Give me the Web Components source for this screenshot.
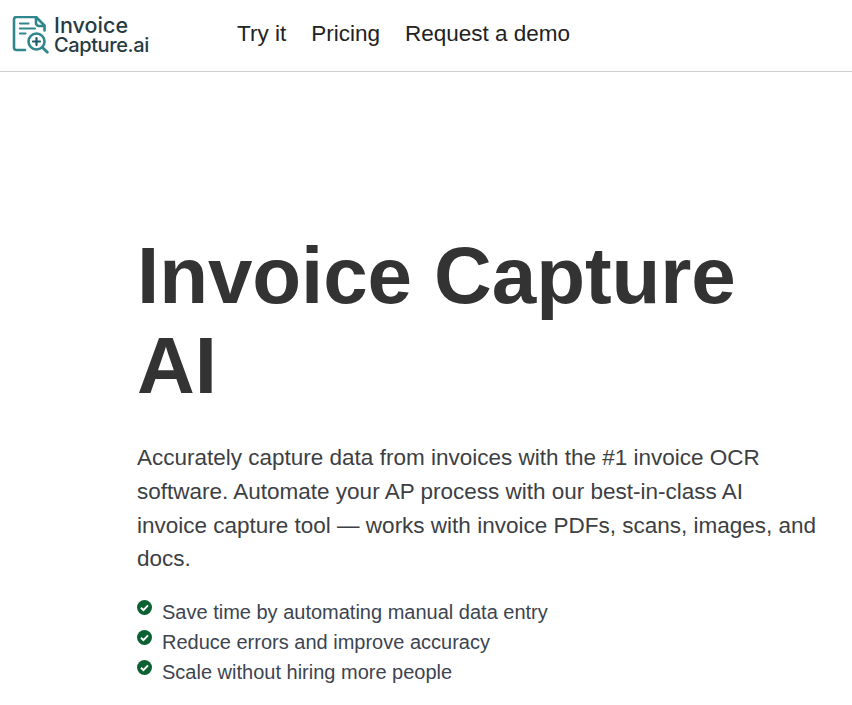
<!DOCTYPE html>
<html>
<head>
<meta charset="utf-8">
<title>Invoice Capture AI</title>
<style>
html, body { margin: 0; padding: 0; background: #fff; overflow: hidden; }
body { font-family: "Liberation Sans", Arial, sans-serif; }
</style>
</head>
<body>
<site-header>
  <a slot="links" href="#">Try it</a>
  <a slot="links" href="#">Pricing</a>
  <a slot="links" href="#">Request a demo</a>
</site-header>
<hero-section>
  <span slot="title">Invoice Capture AI</span>
  <span slot="lead">Accurately capture data from invoices with the #1 invoice OCR software. Automate your AP process with our best-in-class AI invoice capture tool — works with invoice PDFs, scans, images, and docs.</span>
  <check-item>Save time by automating manual data entry</check-item>
  <check-item>Reduce errors and improve accuracy</check-item>
  <check-item>Scale without hiring more people</check-item>
</hero-section>
<script>
class SiteLogo extends HTMLElement {
  connectedCallback() {
    var shadow = this.attachShadow({mode: 'open'})
    shadow.innerHTML = `<style>
:host { display: flex; align-items: center; gap: 5px; width: 150px; }
svg { width: 37px; height: 39px; flex: none; }
#name {
  font-family: Inter, "Liberation Sans", sans-serif;
  font-weight: 500;
  color: #263b44;
  margin-top: -1px;
}
#name div { height: 20px; line-height: 20px; white-space: nowrap; }
#l1 { font-size: 21.500px; letter-spacing: 0.05px; }
#l2 { font-size: 20px; letter-spacing: -0.4px; }
</style>
<svg viewBox="12 16 37 39" fill="none" stroke="#2f868c" stroke-width="2.600" stroke-linecap="round" stroke-linejoin="round">
  <path d="M25 50H16.500a2.500 2.500 0 0 1-2.500-2.500V19.500a2.500 2.500 0 0 1 2.500-2.500H36l8.500 8.500v5"/>
  <path d="M36 17v6a3 3 0 0 0 3 3h5.500"/>
  <path d="M20 23.500h8.500M20 28.500h15M20 33.500h5.500" stroke-width="2.200"/>
  <circle cx="36.500" cy="41.500" r="8"/>
  <path d="M36.500 38v7M33 41.500h7" stroke="#1f5c66" stroke-width="2.200"/>
  <path d="M42.500 47.500l4.800 4.800" stroke-width="2.800"/>
</svg>
<div id="name"><div id="l1">Invoice</div><div id="l2">Capture.ai</div></div>`
  }
}
customElements.define('site-logo', SiteLogo)

class SiteHeader extends HTMLElement {
  connectedCallback() {
    var shadow = this.attachShadow({mode: 'open'})
    shadow.innerHTML = `<style>
:host {
  display: flex;
  align-items: center;
  height: 71px;
  padding-left: 12px;
  border-bottom: 1px solid #cfcfcf;
}
nav { display: flex; gap: 25px; margin-left: 75px; padding-bottom: 4px; }
::slotted(a) {
  font-size: 22.500px;
  color: #222;
  text-decoration: none;
}
</style>
<site-logo></site-logo>
<nav><slot name="links"></slot></nav>`
  }
}
customElements.define('site-header', SiteHeader)

class CheckItem extends HTMLElement {
  connectedCallback() {
    var shadow = this.attachShadow({mode: 'open'})
    shadow.innerHTML = `<style>
:host { display: flex; gap: 10px; font-size: 20px; line-height: 30px; color: #3d4450; }
svg { width: 15px; height: 15px; flex: none; margin-top: 3px; }
</style>
<svg viewBox="0 0 15 15">
  <circle cx="7.500" cy="7.500" r="7.500" fill="#0c6132"/>
  <path d="M4 7.800l2.400 2.300L11 5.400" fill="none" stroke="#fff" stroke-width="2"/>
</svg>
<div><slot></slot></div>`
  }
}
customElements.define('check-item', CheckItem)

class HeroSection extends HTMLElement {
  connectedCallback() {
    var shadow = this.attachShadow({mode: 'open'})
    shadow.innerHTML = `<style>
:host { display: block; padding: 159px 35px 0 137px; }
h1 {
  margin: 0;
  font-size: 80px;
  line-height: 90px;
  font-weight: 700;
  color: #333;
  letter-spacing: -0.1px;
}
p {
  margin: 30px 0 0;
  font-size: 22.500px;
  line-height: 33.750px;
  color: #3d4043;
}
#list { margin-top: 21px; }
</style>
<h1><slot name="title"></slot></h1>
<p><slot name="lead"></slot></p>
<div id="list"><slot></slot></div>`
  }
}
customElements.define('hero-section', HeroSection)
</script>
</body>
</html>
